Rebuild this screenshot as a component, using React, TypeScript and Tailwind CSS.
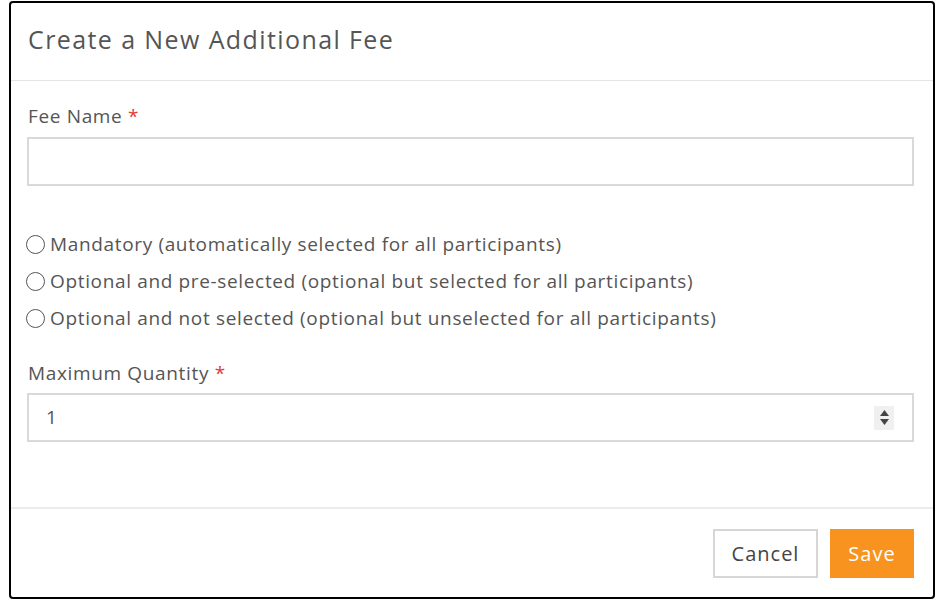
import { useState } from 'react'

const options = [
  'Mandatory (automatically selected for all participants)',
  'Optional and pre-selected (optional but selected for all participants)',
  'Optional and not selected (optional but unselected for all participants)',
]

export default function App() {
  const [feeName, setFeeName] = useState('')
  const [qty, setQty] = useState('1')
  const [choice, setChoice] = useState<number | null>(null)

  return (
    <div className="w-[944px] h-[600px] bg-white pl-[9px] pt-[1px] text-[#555] font-['Open_Sans',sans-serif]">
      <div className="w-[926px] h-[598px] border-2 border-black rounded-[4px] flex flex-col">
        {/* Header */}
        <div className="h-[78px] border-b border-[#e5e5e5] pl-[17px] pb-[3px] flex items-center">
          <h1 className="text-[25px] font-normal text-[#555] tracking-[1.4px]">Create a New Additional Fee</h1>
        </div>

        {/* Body */}
        <div className="flex-1 px-[16px] pt-[23px] tracking-[0.65px]">
          <label className="block text-[19px] leading-[24px] text-[#555] mb-[9px] ml-px">
            Fee Name <span className="text-[#e53935]">*</span>
          </label>
          <input
            value={feeName}
            onChange={(e) => setFeeName(e.target.value)}
            className="w-[887px] h-[49px] border-2 border-[#d9d9d9] outline-none px-[16px] text-[19px]"
          />

          <div className="mt-[46px] flex flex-col gap-[13px]">
            {options.map((label, i) => (
              <label key={label} className="flex items-center gap-[5px] h-[24px] text-[19px] text-[#555] cursor-pointer -ml-px">
                <span
                  onClick={() => setChoice(i)}
                  className="w-[19px] h-[19px] rounded-full border-[1.5px] border-[#555] flex items-center justify-center shrink-0"
                >
                  {choice === i && <span className="w-[9px] h-[9px] rounded-full bg-[#555]" />}
                </span>
                {label}
              </label>
            ))}
          </div>

          <label className="block mt-[31px] text-[19px] leading-[24px] text-[#555] mb-[8px] ml-px">
            Maximum Quantity <span className="text-[#e53935]">*</span>
          </label>
          <div className="w-[887px] h-[49px] border-2 border-[#d9d9d9] flex items-center pl-[17px] pr-[18px]">
            <input
              value={qty}
              onChange={(e) => setQty(e.target.value)}
              className="flex-1 outline-none text-[19px] text-[#555]"
            />
            <div className="w-[20px] h-[24px] bg-[#f0f0f0] flex flex-col items-center justify-center gap-[3px]">
              <svg width="9" height="6" viewBox="0 0 9 6"><path d="M4.5 0L9 6H0z" fill="#444" /></svg>
              <svg width="9" height="6" viewBox="0 0 9 6"><path d="M0 0h9L4.5 6z" fill="#444" /></svg>
            </div>
          </div>
        </div>

        {/* Footer */}
        <div className="h-[90px] border-t-2 border-[#ececec] flex items-start justify-end gap-[12px] pt-[20px] pr-[19px]">
          <button className="w-[105px] h-[49px] border-2 border-[#d6d6d6] bg-white text-[20px] tracking-[1px] text-[#444]">
            Cancel
          </button>
          <button className="w-[84px] h-[49px] bg-[#f7931e] text-[20px] tracking-[1px] text-white">
            Save
          </button>
        </div>
      </div>
    </div>
  )
}
